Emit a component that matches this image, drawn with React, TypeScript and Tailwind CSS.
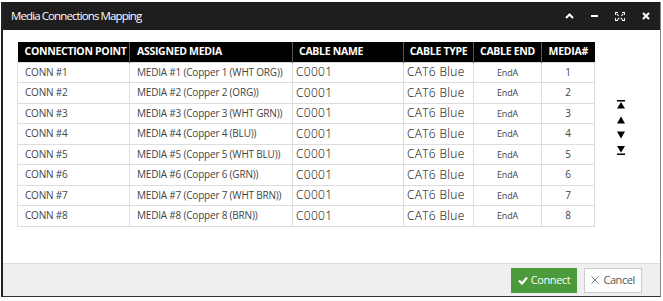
import React from 'react';

const rows = [
  { conn: 'CONN #1', media: 'MEDIA #1 (Copper 1 (WHT ORG))', n: 1 },
  { conn: 'CONN #2', media: 'MEDIA #2 (Copper 2 (ORG))', n: 2 },
  { conn: 'CONN #3', media: 'MEDIA #3 (Copper 3 (WHT GRN))', n: 3 },
  { conn: 'CONN #4', media: 'MEDIA #4 (Copper 4 (BLU))', n: 4 },
  { conn: 'CONN #5', media: 'MEDIA #5 (Copper 5 (WHT BLU))', n: 5 },
  { conn: 'CONN #6', media: 'MEDIA #6 (Copper 6 (GRN))', n: 6 },
  { conn: 'CONN #7', media: 'MEDIA #7 (Copper 7 (WHT BRN))', n: 7 },
  { conn: 'CONN #8', media: 'MEDIA #8 (Copper 8 (BRN))', n: 8 },
];

const App = () => {
  return (
    <div className="w-[663px] h-[301px] bg-white pt-[2px] pl-[1px] font-['Open_Sans',sans-serif]">
      <div className="w-[660px] h-[295px] border-l-2 border-r border-b border-l-[#222] border-r-[#888] border-b-[#333] flex flex-col">
        {/* Title bar */}
        <div className="h-[28px] bg-[#1e1e1e] flex items-center pl-[8px] pr-[10px]">
          <span className="text-white text-[11.5px] tracking-[-0.9px]">Media Connections Mapping</span>
          <div className="ml-auto flex items-center gap-[17px] text-white">
            <svg width="9" height="6" viewBox="0 0 9 6"><path d="M1 5 L4.5 1.5 L8 5" stroke="white" strokeWidth="2" fill="none" /></svg>
            <div className="w-[7px] h-[2px] bg-white" />
            <svg width="10" height="9" viewBox="0 0 10 9" fill="white">
              <path d="M0 0h3v1H1v2H0z M7 0h3v3H9V1H7z M0 6h1v2h2v1H0z M9 6h1v3H7V8h2z M2 1.5l2 2-0.7 0.7-2-2z M8 1.5l-2 2 0.7 0.7 2-2z M2 7.5l2-2 0.7 0.7-2 2z M8 7.5l-2-2-0.7 0.7 2 2z" />
            </svg>
            <svg width="8" height="8" viewBox="0 0 8 8"><path d="M1 1 L7 7 M7 1 L1 7" stroke="white" strokeWidth="2" /></svg>
          </div>
        </div>

        {/* Body */}
        <div className="flex-1 flex pt-[12px] pl-[14px]">
          <table className="border-collapse w-[578px] text-[10px] text-[#444] self-start tracking-[-0.2px]">
            <thead>
              <tr className="bg-black text-white text-[10.5px] font-bold h-[20px] whitespace-nowrap tracking-[-0.3px]">
                <th className="w-[112px] text-left pl-[7px] border-r border-[#555]">CONNECTION POINT</th>
                <th className="w-[163px] text-left pl-[7px] border-r border-[#555]">ASSIGNED MEDIA</th>
                <th className="w-[111px] text-left pl-[6px] border-r border-[#555]">CABLE NAME</th>
                <th className="w-[70px] text-center border-r border-[#555]">CABLE TYPE</th>
                <th className="w-[68px] text-center border-r border-[#555]">CABLE END</th>
                <th className="text-center">MEDIA#</th>
              </tr>
            </thead>
            <tbody>
              {rows.map((r) => (
                <tr key={r.n} className="h-[20.5px] whitespace-nowrap">
                  <td className="border border-[#ddd] pl-[7px]">{r.conn}</td>
                  <td className="border border-[#ddd] pl-[7px]">{r.media}</td>
                  <td className="border border-[#ddd] pl-[3px] text-[12px] font-light text-black tracking-[0.3px]">C0001</td>
                  <td className="border border-[#ddd] pl-[3px] text-[12px] font-light text-black tracking-[0.3px]">CAT6 Blue</td>
                  <td className="border border-[#ddd] text-center text-[9px]">EndA</td>
                  <td className="border border-[#ddd] text-center">{r.n}</td>
                </tr>
              ))}
            </tbody>
          </table>
          <div className="ml-[22px] mt-[58px] flex flex-col items-center gap-[7px] text-[#111]">
            <svg width="8" height="9" viewBox="0 0 8 9"><rect x="0" y="0" width="8" height="1.5" /><path d="M4 2 L8 8.5 L0 8.5z" /></svg>
            <svg width="8" height="8" viewBox="0 0 8 8"><path d="M4 0.5 L8 7.5 L0 7.5z" /></svg>
            <svg width="8" height="8" viewBox="0 0 8 8"><path d="M0 0.5 L8 0.5 L4 7.5z" /></svg>
            <svg width="8" height="9" viewBox="0 0 8 9"><path d="M0 0 L8 0 L4 6.5z" /><rect x="0" y="7.5" width="8" height="1.5" /></svg>
          </div>
        </div>

        {/* Footer */}
        <div className="h-[33px] bg-[#efefef] border-t border-[#ddd] flex items-center justify-end gap-[7px] pr-[18px]">
          <button className="h-[25px] px-[7px] bg-[#4b9b3c] text-white text-[11px] tracking-[-0.4px] flex items-center gap-[3px]">
            <svg width="10" height="9" viewBox="0 0 10 9"><path d="M1 4.5 L4 7.5 L9 1.5" stroke="white" strokeWidth="2.2" fill="none" /></svg>
            Connect
          </button>
          <button className="h-[25px] px-[6px] bg-white border border-[#ccc] text-[#555] text-[11px] tracking-[-0.4px] flex items-center gap-[4px]">
            <svg width="8" height="8" viewBox="0 0 8 8"><path d="M0.5 0.5 L7.5 7.5 M7.5 0.5 L0.5 7.5" stroke="#777" strokeWidth="1" /></svg>
            Cancel
          </button>
        </div>
      </div>
    </div>
  );
};

export default App;
